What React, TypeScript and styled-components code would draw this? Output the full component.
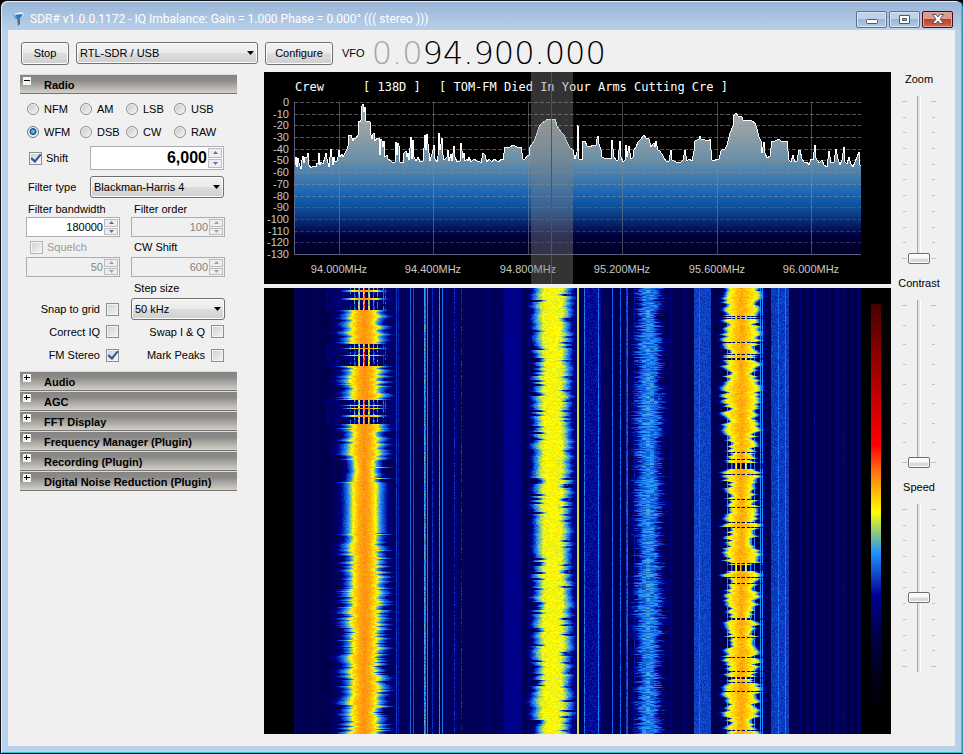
import React, { useMemo, useState } from "react";
import styled, { createGlobalStyle } from "styled-components";

const GlobalStyle = createGlobalStyle`
  * { box-sizing: border-box; }
  body { margin: 0; background: #000; }
  button, input, select { font: inherit; color: inherit; margin: 0; }
`;

const UI_FONT = `"Liberation Sans", Arial, sans-serif`;

/* ---------- window frame ---------- */

const Frame = styled.div`
  min-height: 100vh;
  display: flex;
  flex-direction: column;
  padding: 1px 7px 7px;
  background: linear-gradient(180deg, #98b4d6 0, #b9d1ea 30px);
  border: 1px solid #111;
  border-right-color: #2a9ab8;
  border-radius: 7px 7px 0 0;
  box-shadow: inset 1px 1px 0 #e6f1fa, inset -1px -1px 0 #35c0dd;
  font: 11px/14px ${UI_FONT};
  color: #000;
`;

const TitleBar = styled.header`
  height: 28px;
  display: flex;
  align-items: center;
  gap: 5px;
  padding: 6px 2px 0 3px;
`;

const Title = styled.h1`
  flex: 1;
  margin: 0;
  font: 12px/16px Roboto, sans-serif;
  color: #fff;
  white-space: nowrap;
`;

const Captions = styled.div`
  display: flex;
  gap: 2px;
`;

const CaptionButton = styled.button<{ $close?: boolean }>`
  width: 31px;
  height: 17px;
  padding: 0;
  display: grid;
  place-items: center;
  border: 1px solid ${(p) => (p.$close ? "#4a0c10" : "#5a7192")};
  border-radius: 2px;
  box-shadow: inset 0 0 0 1px ${(p) => (p.$close ? "#e0a69a" : "#d6e4f3")};
  background: ${(p) =>
    p.$close
      ? "linear-gradient(#dc9c8c 0 45%, #b8412a 50%, #cc6a50)"
      : "linear-gradient(#bdd1e8 0 45%, #9ab5d3 50%, #b4cce6)"};
`;

const Client = styled.main`
  flex: 1;
  display: flex;
  flex-direction: column;
  background: #f0f0f0;
`;

const Toolbar = styled.div`
  height: 42px;
  display: flex;
  align-items: center;
  gap: 7px;
  padding: 4px 13px 0;
`;

const PushButton = styled.button<{ $width: number }>`
  width: ${(p) => p.$width}px;
  height: 23px;
  padding: 0;
  border: 1px solid #707070;
  border-radius: 3px;
  box-shadow: inset 0 0 0 1px #fcfcfc;
  background: linear-gradient(#f2f2f2 0, #ebebeb 50%, #dddddd 50%, #cfcfcf);
`;

const SelectBox = styled.span<{ $width?: number }>`
  position: relative;
  display: block;
  width: ${(p) => (p.$width ? p.$width + "px" : "100%")};
  select {
    appearance: none;
    width: 100%;
    height: 22px;
    padding: 0 16px 0 3px;
    border: 1px solid #707070;
    border-radius: 3px;
    box-shadow: inset 0 0 0 1px #fcfcfc;
    background: linear-gradient(#f2f2f2 0, #ebebeb 50%, #dddddd 50%, #cfcfcf);
  }
  svg {
    position: absolute;
    right: 4px;
    top: 9px;
    pointer-events: none;
  }
`;

const Vfo = styled.div`
  display: flex;
  align-items: center;
  padding-left: 2px;
  gap: 7px;
`;

const Frequency = styled.output`
  font: 200 32px/32px "DejaVu Sans", sans-serif;
  color: #000;
  span { color: #a6a6a6; }
`;

const Columns = styled.div`
  flex: 1;
  display: flex;
`;

/* ---------- left panel ---------- */

const LeftPanel = styled.aside`
  width: 256px;
  flex: none;
  padding: 2px 27px 0 12px;
`;

const SectionBar = styled.button`
  width: 100%;
  height: 20px;
  display: flex;
  gap: 13px;
  padding: 2px 0 0 3px;
  border: 0;
  border-top: 1px solid #dcdcda;
  border-bottom: 1px solid #77756f;
  background: linear-gradient(#848484, #8c8b89 30%, #d4d0c8);
  font: bold 11px/16px ${UI_FONT};
  text-align: left;
  white-space: nowrap;
`;

const RadioBody = styled.div`
  height: 277px;
  padding: 3px 12px 0 6px;
`;

const Modes = styled.div`
  display: grid;
  grid-template-columns: 53px 46px 48px 1fr;
  grid-auto-rows: 23px;
  align-items: center;
  padding-left: 1px;
`;

const Check = styled.label<{ $disabled?: boolean; $reverse?: boolean; $gap?: number }>`
  display: flex;
  flex-direction: ${(p) => (p.$reverse ? "row-reverse" : "row")};
  align-items: center;
  gap: ${(p) => p.$gap ?? 4}px;
  padding: ${(p) => (p.$reverse ? "0 1px 0 0" : "0 0 0 4px")};
  color: ${(p) => (p.$disabled ? "#9a9a9a" : "#000")};
  white-space: nowrap;
  input {
    appearance: none;
    flex: none;
    display: grid;
    place-items: center;
    width: 13px;
    height: 13px;
    border: 1px solid ${(p) => (p.$disabled ? "#b4b4b4" : "#8e8f8f")};
    background: linear-gradient(135deg, #cbcfd5, #f6f6f6);
    box-shadow: inset 0 0 0 1px #f4f4f4;
  }
  input:checked::after {
    content: "";
    width: 4px;
    height: 8px;
    margin-top: -2px;
    border: solid #31508e;
    border-width: 0 2px 2px 0;
    rotate: 40deg;
  }
`;

const Mode = styled.label`
  display: flex;
  align-items: center;
  gap: 5px;
  white-space: nowrap;
  input {
    appearance: none;
    flex: none;
    width: 12px;
    height: 12px;
    border: 1px solid #8e8f8f;
    border-radius: 50%;
    background: linear-gradient(135deg, #c3c6ca, #f6f6f6);
    box-shadow: inset 0 0 0 1px #f4f4f4;
  }
  input:checked {
    background: radial-gradient(circle at 50% 45%, #5fc0ea 0 1px, #15477c 3px, #e8ecf0 4px);
    border-color: #68737e;
  }
`;

const WideRow = styled.div<{ $height: number }>`
  display: grid;
  grid-template-columns: 64px 134px;
  height: ${(p) => p.$height}px;
  align-items: center;
  > label:first-child { padding-left: 2px; }
  > ${Check}:first-child { padding-left: 3px; }
`;

const Pair = styled.div<{ $height: number }>`
  display: grid;
  grid-template-columns: 94px 94px;
  column-gap: 11px;
  height: ${(p) => p.$height}px;
  align-items: center;
`;

const FieldLabel = styled.label<{ $inset?: number }>`
  padding-left: ${(p) => p.$inset ?? 3}px;
  white-space: nowrap;
`;

const SpinBox = styled.span<{ $large?: boolean; $disabled?: boolean }>`
  display: flex;
  height: ${(p) => (p.$large ? 24 : 20)}px;
  padding: 1px;
  border: 1px solid #abadb3;
  background: ${(p) => (p.$disabled ? "#f0f0f0" : "#fff")};
  input {
    flex: 1;
    min-width: 0;
    padding: 0 1px 1px 0;
    border: 0;
    background: none;
    text-align: right;
    color: ${(p) => (p.$disabled ? "#838383" : "#000")};
    font: ${(p) => (p.$large ? "bold 16px/18px" : "11px/14px")} ${UI_FONT};
  }
`;

const SpinButtons = styled.span`
  display: flex;
  flex-direction: column;
  width: 14px;
  gap: 1px;
  button {
    flex: 1;
    min-height: 0;
    padding: 0;
    display: grid;
    place-items: center;
    border: 1px solid #bcbcbc;
    background: #eeeeee;
  }
  svg { display: block; }
`;

/* ---------- display ---------- */

const Display = styled.section`
  flex: 1;
  min-width: 0;
  display: flex;
  flex-direction: column;
  gap: 4px;
  padding-bottom: 12px;
`;

const SpectrumSvg = styled.svg`
  display: block;
  width: 100%;
  background: #000;
`;

const WaterfallBox = styled.div`
  flex: 1;
  min-height: 300px;
  display: grid;
  background: #000;
`;

const WaterfallSvg = styled.svg`
  display: block;
  width: 100%;
  height: 100%;
`;

/* ---------- sliders ---------- */

const SliderPanel = styled.aside`
  width: 64px;
  flex: none;
  padding-right: 8px;
  display: flex;
  flex-direction: column;
  gap: 12px;
`;

const SliderGroup = styled.div`
  display: grid;
  justify-items: center;
  height: 192px;
  grid-template-rows: 24px 168px;
`;

const SliderTrack = styled.div`
  display: grid;
  grid-template-columns: 5px 22px 5px;
  gap: 1px;
`;

const Ticks = styled.span`
  display: flex;
  flex-direction: column;
  justify-content: space-between;
  padding: 5px 0;
  i { height: 1px; margin: 0 1px; background: #c4c4c4; }
  i:first-child, i:last-child { margin: 0; }
`;

const Range = styled.input`
  appearance: none;
  writing-mode: vertical-lr;
  direction: rtl;
  width: 22px;
  height: 168px;
  background: linear-gradient(90deg, #a8a8a8 1px, #e4e4e4 1px 3px, #fff 3px) center / 4px 100% no-repeat;
  &::-webkit-slider-thumb {
    appearance: none;
    width: 22px;
    height: 11px;
    border: 1px solid #6e6e6e;
    border-radius: 2px;
    background: linear-gradient(#fafafa 0 45%, #dadada 55%);
    box-shadow: inset 0 0 0 1px #fcfcfc;
  }
`;

const Arrow = () => (
  <svg width="7" height="4" viewBox="0 0 7 4" aria-hidden="true">
    <path d="M0 0h7L3.5 4z" fill="#000" />
  </svg>
);

function DropDown({ id, label, options, width }: { id: string; label?: string; options: string[]; width?: number }) {
  return (
    <SelectBox $width={width}>
      <select id={id} aria-label={label}>
        {options.map((o) => (
          <option key={o}>{o}</option>
        ))}
      </select>
      <Arrow />
    </SelectBox>
  );
}

function Spinner({ id, value, large, disabled, label }: { id: string; value: string; large?: boolean; disabled?: boolean; label?: string }) {
  const [v, setV] = useState(value);
  const fill = disabled ? "#a0a0a0" : "#4a78a8";
  return (
    <SpinBox $large={large} $disabled={disabled}>
      <input id={id} aria-label={label} value={v} disabled={disabled} onChange={(e) => setV(e.target.value)} />
      <SpinButtons>
        <button aria-label="Increase" disabled={disabled}>
          <svg width="5" height="3" viewBox="0 0 5 3"><path d="M0 3L2.500 0L5 3z" fill={fill} /></svg>
        </button>
        <button aria-label="Decrease" disabled={disabled}>
          <svg width="5" height="3" viewBox="0 0 5 3"><path d="M0 0H5L2.500 3z" fill={fill} /></svg>
        </button>
      </SpinButtons>
    </SpinBox>
  );
}

function Section({ title, open }: { title: string; open?: boolean }) {
  return (
    <SectionBar aria-expanded={!!open}>
      <svg width="8" height="8" viewBox="0 0 8 8" shapeRendering="crispEdges">
        <rect width="8" height="8" fill="#f4f4f2" />
        <path d={open ? "M1 3h6v1H1z" : "M1 3h6v1H1zM3 1h1v5H3z"} fill="#000" />
      </svg>
      <span>{title}</span>
    </SectionBar>
  );
}

/* ---------- spectrum ---------- */

// Trace vertices in third-of-a-pixel units.
const TRACE =
  "104,285 108,262 112,290 115,265 118,280 124,296 127,270 130,258 133,278 136,262 140,262 143,248 146,285 152,294 160,288 168,290 172,278 175,282 178,250 181,285 184,275 190,282 195,262 198,250 202,268 206,290 210,262 214,238 218,284 222,262 226,276 230,274 234,262 238,240 241,262 245,252 250,262 256,248 262,236 265,228 268,194 274,196 278,212 282,205 288,204 293,196 296,152 300,157 304,150 307,108 310,102 313,125 316,110 319,152 325,154 330,156 333,196 336,208 340,192 343,188 346,212 350,205 356,205 360,255 364,208 367,214 370,232 373,214 376,260 380,255 385,268 392,274 398,278 404,276 408,216 411,255 414,220 417,228 420,276 428,278 433,248 437,242 440,262 444,248 448,270 452,202 455,268 460,210 463,262 468,272 473,262 480,276 490,272 494,196 498,240 502,192 506,250 510,272 518,240 522,226 526,268 530,275 534,258 538,188 541,240 546,204 549,255 553,270 560,262 563,240 567,272 572,252 577,272 582,228 586,262 592,276 600,272 604,218 608,264 612,250 615,274 620,266 624,272 627,262 632,276 642,268 650,274 658,272 664,278 668,250 674,254 680,276 686,266 695,276 703,266 710,274 716,276 724,266 730,270 734,232 740,230 750,232 760,224 770,230 784,230 788,268 794,268 800,258 806,254 810,230 816,222 822,212 826,206 832,190 838,172 846,160 855,152 862,146 870,150 876,146 884,148 890,168 896,176 904,186 912,194 920,216 930,234 938,240 946,268 950,245 954,166 958,268 966,270 970,212 976,212 982,228 990,230 1000,226 1008,224 1012,206 1015,198 1018,222 1022,240 1027,262 1038,266 1050,264 1054,266 1057,210 1061,260 1068,270 1075,270 1079,212 1082,260 1088,276 1094,270 1097,225 1102,262 1108,228 1112,268 1118,262 1123,240 1128,232 1134,215 1144,206 1152,194 1158,204 1166,208 1174,230 1182,218 1185,232 1189,212 1193,240 1200,244 1208,258 1218,272 1226,274 1232,240 1236,270 1248,276 1260,278 1270,270 1274,240 1280,272 1288,268 1296,274 1302,244 1305,212 1316,208 1319,198 1324,208 1334,210 1346,212 1350,208 1356,270 1362,272 1370,268 1376,268 1382,244 1390,238 1396,238 1402,226 1410,188 1418,168 1420,142 1427,130 1433,138 1445,142 1450,150 1465,150 1475,154 1485,158 1490,178 1496,200 1502,214 1506,248 1511,216 1516,250 1522,264 1530,258 1535,214 1545,212 1556,206 1564,212 1582,214 1588,270 1592,275 1598,256 1604,276 1610,272 1616,240 1620,240 1625,268 1632,276 1640,276 1648,284 1654,266 1660,270 1664,224 1668,264 1678,278 1686,270 1692,284 1700,290 1708,244 1714,280 1722,276 1729,236 1734,266 1740,284 1747,270 1751,232 1755,276 1762,282 1768,260 1772,282 1780,292 1786,276 1796,246 1800,285 1803,288";

const tracePoints = TRACE.split(" ").map((p) => {
  const [x, y] = p.split(",").map(Number);
  return `${Math.round(x / 3 - 4)},${Math.round(y / 3 - 2)}`;
});
const traceLine = "M" + tracePoints.join("L");
const traceArea = traceLine + "V182H30Z";

const GRID_X = [75, 169, 264, 358, 453, 547];
const FREQS = ["94.000MHz", "94.400MHz", "94.800MHz", "95.200MHz", "95.600MHz", "96.000MHz"];
const DB = Array.from({ length: 14 }, (_, i) => i * 10);
const dbY = (db: number) => 30 + Math.round((db * 152) / 130);

function Spectrum() {
  return (
    <SpectrumSvg viewBox="0 0 627 212" role="img" aria-label="Spectrum analyzer">
      <defs>
        <linearGradient id="fill" gradientUnits="userSpaceOnUse" x1="0" y1="30" x2="0" y2="182">
          <stop offset="0" stopColor="#b4b4b4" />
          <stop offset="0.2" stopColor="#929fa6" />
          <stop offset="0.36" stopColor="#6f92a8" />
          <stop offset="0.5" stopColor="#3e7bb0" />
          <stop offset="0.61" stopColor="#1464b4" />
          <stop offset="0.72" stopColor="#0c4690" />
          <stop offset="0.88" stopColor="#00003c" />
          <stop offset="1" stopColor="#000026" />
        </linearGradient>
      </defs>
      <path d={traceArea} fill="url(#fill)" />
      <g stroke="#8c8c8c" shapeRendering="crispEdges">
        {DB.slice(0, 13).map((db) => (
          <path key={db} d={`M30 ${dbY(db)}.5H597`} strokeDasharray="4 2" strokeOpacity={db > 80 ? 0.3 : 0.6} />
        ))}
        {GRID_X.map((x) => (
          <path key={x} d={`M${x}.5 30V182`} strokeOpacity="0.5" />
        ))}
      </g>
      <path d="M30.500 30V182.500H597" fill="none" stroke="#8484b0" strokeOpacity="0.7" shapeRendering="crispEdges" />
      <path d={traceLine} fill="none" stroke="#fff" strokeWidth="1" shapeRendering="crispEdges" />
      <g fill="#c8c8c8" fontFamily='"Liberation Sans", sans-serif' fontSize="11">
        {DB.map((db) => (
          <text key={db} x="25" y={dbY(db) + 4} textAnchor="end">{db ? `-${db}` : "0"}</text>
        ))}
        {FREQS.map((f, i) => (
          <text key={f} x={GRID_X[i]} y="201" textAnchor="middle">{f}</text>
        ))}
      </g>
      <g fill="#fff" fontFamily='"DejaVu Sans Mono", monospace' fontSize="12">
        <text x="31" y="19">Crew</text>
        <text x="99" y="19">[ 138D ]</text>
        <text x="175" y="19">[ TOM-FM Died In Your Arms Cutting Cre ]</text>
      </g>
      <rect x="267" width="42" height="212" fill="#808080" fillOpacity="0.4" />
      <rect x="287" width="1" height="212" fill="#f01010" shapeRendering="crispEdges" />
    </SpectrumSvg>
  );
}

/* ---------- waterfall ---------- */

const STOPS: [number, number[]][] = [
  [0, [0, 0, 0]],
  [0.1, [0, 0, 24]],
  [0.2, [0, 0, 72]],
  [0.3, [0, 0, 145]],
  [0.4, [30, 144, 255]],
  [0.5, [255, 255, 0]],
  [0.6, [254, 109, 22]],
  [0.66, [255, 0, 0]],
  [1, [74, 0, 0]],
];

const LEVELS = 90;

function colour(v: number) {
  const i = Math.max(1, STOPS.findIndex((s) => s[0] >= v));
  const [a, ca] = STOPS[i - 1];
  const [b, cb] = STOPS[i];
  const t = (v - a) / (b - a);
  return `rgb(${ca.map((c, k) => Math.round(c + (cb[k] - c) * t)).join(",")})`;
}

function hash(x: number, y: number) {
  let h = Math.imul(x + 374, 668265263) ^ Math.imul(y + 91, 374761393);
  h = Math.imul(h ^ (h >>> 13), 1274126177);
  return ((h ^ (h >>> 16)) >>> 0) / 4294967296;
}

function drift(seed: number, y: number, step: number) {
  const k = Math.floor(y / step);
  const t = y / step - k;
  return hash(seed, k) * (1 - t) + hash(seed, k + 1) * t;
}

function curve(u: number, pts: number[][]) {
  for (let i = 1; i < pts.length; i++) {
    if (u < pts[i][0]) {
      const [a, va] = pts[i - 1];
      const [b, vb] = pts[i];
      return va + ((u - a) / (b - a)) * (vb - va);
    }
  }
  return 0;
}

// x, width, level, noise
const BANDS = [
  [240, 18, 0.29, 0.03], [301, 10, 0.3, 0.12], [320, 17, 0.305, 0.04],
  [430, 17, 0.345, 0.03], [507, 18, 0.34, 0.03],
];

// x, level, noise
const LINES = [
  [31, 0.25, 0], [55, 0.26, 0], [67, 0.26, 0], [71, 0.25, 0], [132, 0.34, 0.03], [134, 0.32, 0.02],
  [146, 0.37, 0.01], [149, 0.35, 0.02], [160, 0.41, 0.06], [161, 0.38, 0.07], [163, 0.39, 0.01],
  [168, 0.33, 0.04], [170, 0.27, 0.02], [175, 0.4, 0.02], [178, 0.38, 0.01], [182, 0.27, 0],
  [190, 0.31, 0.1], [192, 0.28, 0.02], [197, 0.31, 0.1], [199, 0.27, 0], [218, 0.24, 0], [226, 0.24, 0],
  [320, 0.38, 0.05], [334, 0.38, 0.05], [336, 0.3, 0.03], [348, 0.37, 0.03], [356, 0.36, 0.06],
  [362, 0.34, 0.05], [363, 0.36, 0.05], [370, 0.31, 0.04], [406, 0.27, 0.01], [420, 0.28, 0.02], [435, 0.37, 0.04], [500, 0.29, 0.04],
  [514, 0.38, 0.05], [521, 0.38, 0.03], [536, 0.27, 0], [543, 0.27, 0], [550, 0.3, 0.02],
  [565, 0.29, 0], [572, 0.28, 0], [579, 0.3, 0.02], [594, 0.26, 0],
];

// offset from the carrier -> level while the station is quiet
const QUIET: Record<number, number> = {
  [-14]: 0.35, [-10]: 0.39, [-9]: 0.33, [-6]: 0.45, [-5]: 0.5, [-1]: 0.56, 0: 0.63,
  4: 0.5, 5: 0.46, 9: 0.4, 10: 0.33, 13: 0.38, 19: 0.36, 21: 0.33,
};

function station1(d: number, y: number) {
  const gap = y < 22 || (y > 55 && y < 78) || (y > 111 && y < 136);
  const spike = [2, 3, 10, 11, 60, 67, 117, 120, 127, 128].includes(y);
  if (gap && !spike) {
    const s = QUIET[d];
    return s ? s + (hash(d, y >> 1) - 0.6) * 0.12 : 0.21 + hash(d, y >> 2) * 0.08;
  }
  const smooth = y > 194 && y < 245;
  let h = 14 + drift(1, y, 24) * 2;
  if (!smooth) h += (drift(d < 0 ? 2 : 3, y, 2) - 0.5) * 7;
  if (y > 171 && y < 194) h = 10 + drift(d < 0 ? 2 : 3, y, 3) * 3;
  if (spike) h = 15;
  if (hash(d < 0 ? 8 : 9, y) > 0.95 && !smooth) h = 18;
  if (y > 268 && hash(d < 0 ? 6 : 7, y) > 0.8) h -= 3;
  return (
    curve(Math.abs(d) / h, [[0, 0.575], [0.4, 0.555], [0.75, 0.51], [0.95, 0.45], [1.15, 0.39], [1.45, 0.33], [1.75, 0.27], [2.1, 0.2], [2.2, 0]]) +
    (hash(d, y) - 0.5) * 0.025
  );
}

function station2(d: number, y: number) {
  const side = d < 0 ? 12 : 13;
  let h = 14 + (drift(side, y, 3) - 0.5) * 4 + drift(11, y, 20) * 2;
  if (hash(side, y >> 1) > 0.84) h = 8 + hash(side + 3, y) * 4;
  return (
    curve(Math.abs(d) / h, [[0, 0.5], [0.6, 0.492], [0.85, 0.45], [1.1, 0.385], [1.4, 0.3], [1.8, 0.2], [1.9, 0]]) +
    (hash((d + 70) >> 1, y) - 0.45) * 0.035
  );
}

function station3(d: number, y: number) {
  const h = 4 + drift(21, y, 30) * 3 + hash(d < 0 ? 22 : 23, y) * 6;
  return (
    curve(Math.abs(d) / h, [[0, 0.395], [0.7, 0.375], [1.1, 0.34], [1.5, 0.29], [2, 0.23], [2.2, 0]]) +
    (hash((d + 170) >> 2, y) - 0.5) * 0.07
  );
}

function station4(d: number, y: number) {
  const gap =
    hash(30, y) > 0.96 || (y > 174 && y < 181) || (y > 276 && y < 283) || (y > 69 && y < 72) || (y > 388 && y < 391);
  if (gap) {
    return QUIET[d] ?? 0.22;
  }
  const body = 13 + (drift(31, y, 7) - 0.5) * 10;
  const h = Math.min(18, Math.max(8, body + (drift(d < 0 ? 32 : 33, y, 2) - 0.4) * 8));
  const edge = QUIET[d] && Math.abs(d) > 8 ? 0.4 : 0;
  return Math.max(
    edge,
    curve(Math.abs(d) / h, [[0, 0.56], [0.35, 0.54], [0.8, 0.505], [1, 0.45], [1.12, 0.38], [1.3, 0.28], [1.6, 0.2], [1.7, 0]]) +
      (hash((d + 30) >> 1, y) - 0.5) * 0.03,
  );
}

const FIRST = 30;
const LAST = 597;

function columnLevel(x: number): [number, number] {
  if (x >= 313 && x <= 314) return [0.475, 0];
  const line = LINES.find((l) => l[0] === x);
  if (line) return [line[1], line[2]];
  const band = BANDS.find((b) => x >= b[0] && x < b[0] + b[1]);
  if (band) return [band[2], band[3]];
  return [0.2 + hash(x, 5) * 0.025 + (x > 122 && x < 350 ? 0.01 : 0), 0];
}

function buildWaterfall(height: number) {
  const paths: string[] = Array(LEVELS).fill("");
  const cols = Array.from({ length: LAST }, (_, x) => columnLevel(x));
  for (let y = 0; y < height; y++) {
    let start = FIRST;
    let current = -1;
    for (let x = FIRST; x <= LAST; x++) {
      let q = -2;
      if (x < LAST) {
        let [v, noise] = cols[x];
        if (noise) v += (hash(x, y) - 0.5) * noise;
        if (x > 60 && x < 136) v = Math.max(v, station1(x - 100, y));
        if (x > 258 && x < 313) {
          if (x < 270 || x > 306) v = Math.min(v, 0.3);
          v = Math.max(v, station2(x - 288, y));
        }
        if (x > 358 && x < 412) v = Math.max(v, station3(x - 384, y));
        if (x > 450 && x < 504) v = Math.max(v, station4(x - 477, y));
        q = Math.max(0, Math.min(LEVELS - 1, Math.round(v * LEVELS)));
      }
      if (q !== current) {
        if (current >= 0) paths[current] += `M${start} ${y}h${x - start}v1H${start}z`;
        start = x;
        current = q;
      }
    }
  }
  return paths;
}

function Waterfall() {
  const paths = useMemo(() => buildWaterfall(446), []);
  return (
    <WaterfallSvg viewBox="0 0 627 446" preserveAspectRatio="none" role="img" aria-label="Waterfall">
      <defs>
        <linearGradient id="scale" x1="0" y1="1" x2="0" y2="0">
          {STOPS.map(([p]) => (
            <stop key={p} offset={p} stopColor={colour(p)} />
          ))}
        </linearGradient>
      </defs>
      <g shapeRendering="crispEdges">
        {paths.map((d, i) => (d ? <path key={i} d={d} fill={colour(i / LEVELS)} /> : null))}
      </g>
      <rect x="607" y="16" width="10" height="416" fill="url(#scale)" />
    </WaterfallSvg>
  );
}

function Slider({ label, ticks, value }: { label: string; ticks: number; value: number }) {
  const marks = Array.from({ length: ticks }, (_, i) => <i key={i} />);
  return (
    <SliderGroup>
      <label htmlFor={label}>{label}</label>
      <SliderTrack>
        <Ticks>{marks}</Ticks>
        <Range id={label} type="range" min={0} max={100} defaultValue={value} />
        <Ticks>{marks}</Ticks>
      </SliderTrack>
    </SliderGroup>
  );
}

const MODES = ["NFM", "AM", "LSB", "USB", "WFM", "DSB", "CW", "RAW"];

export default function App() {
  return (
    <>
      <GlobalStyle />
      <Frame>
        <TitleBar>
          <svg width="14" height="16" viewBox="0 0 14 16" aria-hidden="true">
            <path d="M6 6l3 0 0 7-2 2z" fill="#5d6d80" />
            <path d="M2 3L11 1l2 3-8 4z" fill="#e8f4fb" />
            <path d="M2 4l10-1-2 3-5 2z" fill="#2476b8" />
            <path d="M1 2l3 1 2 4-3-2z" fill="#7cc4e8" />
          </svg>
          <Title>SDR# v1.0.0.1172 - IQ Imbalance: Gain = 1.000 Phase = 0.000° ((( stereo )))</Title>
          <Captions>
            <CaptionButton aria-label="Minimize">
              <svg width="12" height="9" viewBox="0 0 12 9"><rect x="0.500" y="4.500" width="11" height="4" rx="1" fill="#fff" stroke="#535666" /></svg>
            </CaptionButton>
            <CaptionButton aria-label="Maximize">
              <svg width="11" height="9" viewBox="0 0 11 9" fillRule="evenodd"><path d="M.5.5h10v8H.5zM3.500 3.500v2h4v-2z" fill="#fff" stroke="#535666" /></svg>
            </CaptionButton>
            <CaptionButton aria-label="Close" $close>
              <svg width="12" height="10" viewBox="0 0 12 10"><path d="M.5.5h3.500l2 2.500 2-2.500h3.500L8 5l3.500 4.500H8L6 7 4 9.500H.5L4 5z" fill="#fff" stroke="#535666" /></svg>
            </CaptionButton>
          </Captions>
        </TitleBar>
        <Client>
          <Toolbar>
            <PushButton $width={48}>Stop</PushButton>
            <DropDown id="source" label="Source" options={["RTL-SDR / USB"]} width={182} />
            <PushButton $width={68}>Configure</PushButton>
            <Vfo>
              <label htmlFor="vfo">VFO</label>
              <Frequency id="vfo"><span>0.0</span>94.900.000</Frequency>
            </Vfo>
          </Toolbar>
          <Columns>
            <LeftPanel>
              <Section title="Radio" open />
              <RadioBody>
                <Modes>
                  {MODES.map((m) => (
                    <Mode key={m}>
                      <input type="radio" name="mode" defaultChecked={m === "WFM"} />
                      {m}
                    </Mode>
                  ))}
                </Modes>
                <WideRow $height={30}>
                  <Check><input type="checkbox" defaultChecked />Shift</Check>
                  <Spinner id="shift" label="Shift frequency" value="6,000" large />
                </WideRow>
                <WideRow $height={28}>
                  <FieldLabel htmlFor="ftype">Filter type</FieldLabel>
                  <DropDown id="ftype" options={["Blackman-Harris 4"]} />
                </WideRow>
                <Pair $height={16}>
                  <FieldLabel htmlFor="fbw" $inset={2}>Filter bandwidth</FieldLabel>
                  <FieldLabel htmlFor="forder">Filter order</FieldLabel>
                </Pair>
                <Pair $height={20}>
                  <Spinner id="fbw" value="180000" />
                  <Spinner id="forder" value="100" disabled />
                </Pair>
                <Pair $height={20}>
                  <Check $disabled><input type="checkbox" disabled />Squelch</Check>
                  <FieldLabel htmlFor="cwshift">CW Shift</FieldLabel>
                </Pair>
                <Pair $height={20}>
                  <Spinner id="squelch" label="Squelch level" value="50" disabled />
                  <Spinner id="cwshift" value="600" disabled />
                </Pair>
                <Pair $height={21}>
                  <span />
                  <FieldLabel htmlFor="step">Step size</FieldLabel>
                </Pair>
                <Pair $height={20}>
                  <Check $reverse $gap={6}><input type="checkbox" />Snap to grid</Check>
                  <DropDown id="step" options={["50 kHz"]} />
                </Pair>
                <Pair $height={27}>
                  <Check $reverse $gap={6}><input type="checkbox" />Correct IQ</Check>
                  <Check $reverse $gap={6}><input type="checkbox" />Swap I &amp; Q</Check>
                </Pair>
                <Pair $height={20}>
                  <Check $reverse $gap={6}><input type="checkbox" defaultChecked />FM Stereo</Check>
                  <Check $reverse $gap={6}><input type="checkbox" />Mark Peaks</Check>
                </Pair>
              </RadioBody>
              {["Audio", "AGC", "FFT Display", "Frequency Manager (Plugin)", "Recording (Plugin)", "Digital Noise Reduction (Plugin)"].map((t) => (
                <Section key={t} title={t} />
              ))}
            </LeftPanel>
            <Display>
              <Spectrum />
              <WaterfallBox>
                <Waterfall />
              </WaterfallBox>
            </Display>
            <SliderPanel>
              <Slider label="Zoom" ticks={11} value={0} />
              <Slider label="Contrast" ticks={9} value={0} />
              <Slider label="Speed" ticks={11} value={44} />
            </SliderPanel>
          </Columns>
        </Client>
      </Frame>
    </>
  );
}
